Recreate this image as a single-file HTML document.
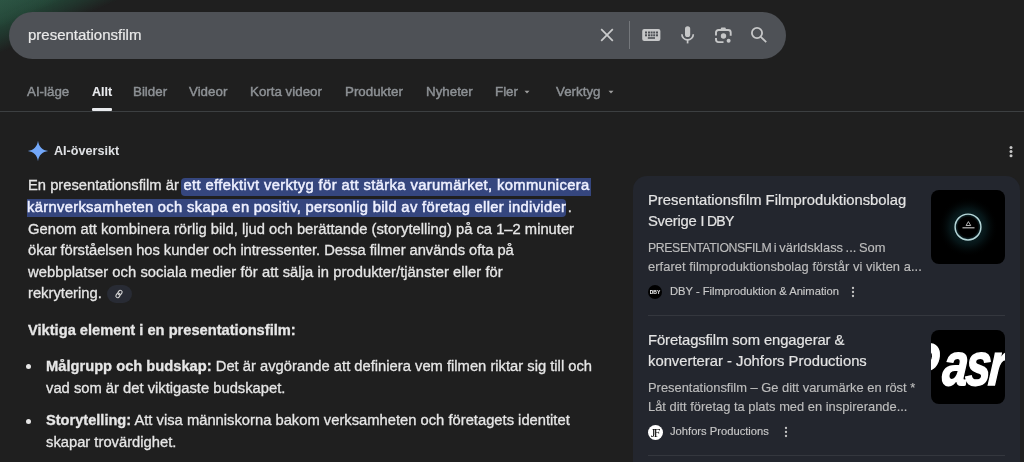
<!DOCTYPE html>
<html><head><meta charset="utf-8">
<style>
*{margin:0;padding:0;box-sizing:border-box}
html,body{width:1024px;height:462px;overflow:hidden;background:#1f1f1f;font-family:"Liberation Sans",sans-serif;color:#e3e3e3}
.abs{position:absolute;white-space:nowrap}
#glow{position:absolute;left:0;top:0;width:300px;height:120px;background:linear-gradient(155.8deg,rgba(62,105,88,0.3) 0%,rgba(62,105,88,0.22) 5%,rgba(62,105,88,0) 11%),linear-gradient(155.8deg,rgba(37,76,59,1) 0%,rgba(35,70,55,0.95) 9%,rgba(33,58,48,0.75) 15%,rgba(31,31,31,0) 21%)}
#sb{position:absolute;left:9px;top:12px;width:777px;height:47px;border-radius:23.5px;background:#4e5156}
#q{left:28px;top:25.6px;font-size:15px;color:#eaeaea;line-height:17px;-webkit-text-stroke:0.2px #eaeaea}
.tab{top:84px;font-size:13.35px;color:#8d9195;line-height:15px;-webkit-text-stroke:0.45px #8d9195}
#tabline{position:absolute;left:0;top:111px;width:1024px;height:1px;background:#3c3f41}
#ul{position:absolute;left:92px;top:108px;width:20px;height:3px;background:#e8eaed;border-radius:1px}
.p{left:28px;font-size:14.75px;color:#e6e6e6;line-height:17px;-webkit-text-stroke:0.3px #e6e6e6}
.hl{color:#eef0ff;-webkit-text-stroke:0.5px #eef0ff}
.hlb{position:absolute;background:#35467e;height:18px}
#card{position:absolute;left:633px;top:176px;width:387px;height:300px;border-radius:14px;background:#23262e}
.ct{font-size:14.8px;color:#e3e3e3;line-height:17px;-webkit-text-stroke:0.2px #e3e3e3}
.cs{font-size:12.9px;color:#bdbdbd;line-height:15px;-webkit-text-stroke:0.15px #bdbdbd}
.src{font-size:11.2px;color:#c8c8c8;line-height:13px;-webkit-text-stroke:0.15px #c8c8c8}
.thumb{position:absolute;left:931px;width:74px;height:74px;border-radius:8px;background:#000;overflow:hidden}
.ic{position:absolute}
</style></head><body><div id="wrap" style="position:absolute;left:0;top:0;width:1024px;height:462px;will-change:transform">
<div id="glow"></div>
<div id="sb"></div>
<div class="abs" id="q">presentationsfilm</div>

<!-- search icons -->
<svg class="ic" style="left:598px;top:26px" width="18" height="18" viewBox="0 0 18 18"><path d="M3.2 3.2L14.8 14.8M14.8 3.2L3.2 14.8" stroke="#cbcccd" stroke-width="1.7"/></svg>
<div class="abs" style="left:629px;top:21px;width:1px;height:28px;background:#74777b"></div>
<svg class="ic" style="left:641px;top:28px" width="21" height="14" viewBox="0 0 21 14">
 <rect x="1.2" y="1" width="18.2" height="12" rx="2" fill="#c6c7c8"/>
 <g fill="#4d5055">
  <rect x="4" y="3.5" width="2" height="2"/><rect x="7" y="3.5" width="2" height="2"/><rect x="9.6" y="3.5" width="2" height="2"/><rect x="12.2" y="3.5" width="2" height="2"/><rect x="15" y="3.5" width="2" height="2"/>
  <rect x="4" y="6.3" width="2" height="2"/><rect x="7" y="6.3" width="2" height="2"/><rect x="9.6" y="6.3" width="2" height="2"/><rect x="12.2" y="6.3" width="2" height="2"/><rect x="15" y="6.3" width="2" height="2"/>
  <rect x="6.8" y="9.2" width="7.2" height="1.6"/>
 </g>
</svg>
<svg class="ic" style="left:680px;top:25px" width="16" height="20" viewBox="0 0 16 20">
 <rect x="5" y="1.2" width="5.2" height="10.8" rx="2.6" fill="#c6c7c8"/>
 <path d="M1.9 9.2a5.7 5.7 0 0 0 11.4 0" fill="none" stroke="#c6c7c8" stroke-width="1.7"/>
 <path d="M7.6 15v3.4" stroke="#c6c7c8" stroke-width="1.7"/>
</svg>
<svg class="ic" style="left:713px;top:25px" width="21" height="21" viewBox="0 0 21 21">
 <g fill="none" stroke="#c6c7c8" stroke-width="1.9">
  <path d="M3 10.5V7.5a2.5 2.5 0 0 1 2.5-2.5h9.7a2.5 2.5 0 0 1 2.5 2.5v3.2"/>
  <path d="M3 13v1.6a2.5 2.5 0 0 0 2.5 2.5h5"/>
 </g>
 <rect x="7.8" y="2.4" width="5" height="2.8" rx="1" fill="#c6c7c8"/>
 <circle cx="10.5" cy="11" r="2.7" fill="#c6c7c8"/>
 <circle cx="15.6" cy="15.8" r="2" fill="#c6c7c8"/>
</svg>
<svg class="ic" style="left:749px;top:25px" width="20" height="20" viewBox="0 0 20 20">
 <circle cx="8" cy="8" r="5.1" fill="none" stroke="#c6c7c8" stroke-width="1.8"/>
 <path d="M11.8 11.8L17.2 17.2" stroke="#c6c7c8" stroke-width="1.8"/>
</svg>

<div class="abs tab" style="left:27px">AI-läge</div>
<div class="abs tab" style="left:92px;color:#e8eaed;font-weight:bold;font-size:12.5px;top:84.5px;-webkit-text-stroke:0.1px #e8eaed">Allt</div>
<div class="abs tab" style="left:133px">Bilder</div>
<div class="abs tab" style="left:189px">Videor</div>
<div class="abs tab" style="left:250px">Korta videor</div>
<div class="abs tab" style="left:345px">Produkter</div>
<div class="abs tab" style="left:426px">Nyheter</div>
<div class="abs tab" style="left:495px">Fler</div>
<svg class="ic" style="left:523px;top:89px" width="8" height="6" viewBox="0 0 8 6"><path d="M1.5 1.8h5L4 4.4z" fill="#9e9e9e"/></svg>
<div class="abs tab" style="left:556px">Verktyg</div>
<svg class="ic" style="left:607px;top:89px" width="8" height="6" viewBox="0 0 8 6"><path d="M1.5 1.8h5L4 4.4z" fill="#9e9e9e"/></svg>
<div id="tabline"></div>
<div id="ul"></div>

<!-- AI overview header -->
<svg class="ic" style="left:27.2px;top:140px" width="22" height="22" viewBox="0 0 22 22">
 <path d="M11 0.8C11.7 6.6 15.3 10.3 21.2 11C15.3 11.7 11.7 15.4 11 21.2C10.3 15.4 6.7 11.7 0.8 11C6.7 10.3 10.3 6.6 11 0.8Z" fill="#72a7f9"/>
</svg>
<div class="abs" style="left:54px;top:144px;font-size:12.6px;font-weight:bold;color:#dfe1e4;line-height:14px">AI-översikt</div>
<svg class="ic" style="left:1008px;top:145px" width="6" height="14" viewBox="0 0 6 14"><circle cx="3" cy="2.6" r="1.5" fill="#c8c8c8"/><circle cx="3" cy="6.6" r="1.5" fill="#c8c8c8"/><circle cx="3" cy="10.7" r="1.5" fill="#c8c8c8"/></svg>

<div class="hlb" style="left:181px;top:178px;width:410px;border-radius:4px 0 0 4px"></div>
<div class="hlb" style="left:27px;top:199px;width:539px;border-radius:0 4px 4px 0"></div>
<div class="abs p" style="top:177px">En presentationsfilm är <span class="hl" style="margin-left:-1px;padding-left:1.5px;letter-spacing:0.38px">ett effektivt verktyg för att stärka varumärket, kommunicera</span></div>
<div class="abs p" style="top:199px"><span class="hl" style="margin-left:-1px;padding-right:1.5px;letter-spacing:0.318px">kärnverksamheten och skapa en positiv, personlig bild av företag eller individer</span>.</div>
<div class="abs p" style="top:221px">Genom att kombinera rörlig bild, ljud och berättande (storytelling) på ca 1–2 minuter</div>
<div class="abs p" style="top:242px;letter-spacing:-0.05px">ökar förståelsen hos kunder och intressenter. Dessa filmer används ofta på</div>
<div class="abs p" style="top:264px;letter-spacing:0.055px">webbplatser och sociala medier för att sälja in produkter/tjänster eller för</div>
<div class="abs p" style="top:285px">rekrytering.</div>
<div class="abs" style="left:107px;top:285px;width:25px;height:18px;border-radius:9px;background:#282b34"></div>
<svg class="ic" style="left:113px;top:288px" width="12" height="12" viewBox="0 0 12 12"><g transform="rotate(-55 6 6)" fill="none" stroke="#d2d2d2" stroke-width="1.1"><rect x="1.9" y="4.2" width="4.8" height="3.6" rx="1.8"/><rect x="5.3" y="4.2" width="4.8" height="3.6" rx="1.8"/></g></svg>

<div class="abs p" style="top:322px;font-weight:bold;font-size:14.66px">Viktiga element i en presentationsfilm:</div>
<div class="abs" style="left:26px;top:364px;width:5px;height:5px;border-radius:50%;background:#e6e6e6"></div>
<div class="abs p" style="top:358px;left:46px"><b style="font-size:14.7px">Målgrupp och budskap:</b> Det är avgörande att definiera vem filmen riktar sig till och</div>
<div class="abs p" style="top:380px;left:46px">vad som är det viktigaste budskapet.</div>
<div class="abs" style="left:26px;top:418.5px;width:5px;height:5px;border-radius:50%;background:#e6e6e6"></div>
<div class="abs p" style="top:412px;left:46px"><b style="font-size:14.6px">Storytelling:</b> Att visa människorna bakom verksamheten och företagets identitet</div>
<div class="abs p" style="top:434px;left:46px">skapar trovärdighet.</div>

<!-- cards -->
<div id="card"></div>
<div class="abs ct" style="left:648px;top:192px">Presentationsfilm Filmproduktionsbolag</div>
<div class="abs ct" style="left:648px;top:213px"><span style="letter-spacing:-0.25px">Sverige</span> <span style="letter-spacing:-0.7px;font-size:14px">I DBY</span></div>
<div class="abs cs" style="left:648px;top:239.5px;word-spacing:-1px"><span style="font-size:12.3px;letter-spacing:-0.4px">PRESENTATIONSFILM</span> i världsklass ... Som</div>
<div class="abs cs" style="left:648px;top:259.3px;letter-spacing:0.06px">erfaret filmproduktionsbolag förstår vi vikten a...</div>
<div class="abs" style="left:648px;top:285px;width:14px;height:14px;border-radius:50%;background:#000;color:#fff;font-size:5px;font-weight:bold;text-align:center;line-height:14px">DBY</div>
<div class="abs src" style="left:670px;top:285px">DBY - Filmproduktion &amp; Animation</div>
<svg class="ic" style="left:850px;top:286px" width="6" height="12" viewBox="0 0 6 12"><circle cx="3" cy="2" r="1.15" fill="#c4c4c4"/><circle cx="3" cy="6" r="1.15" fill="#c4c4c4"/><circle cx="3" cy="10" r="1.15" fill="#c4c4c4"/></svg>
<div class="thumb" style="top:190px">
 <svg width="74" height="74" viewBox="0 0 74 74">
  <defs><radialGradient id="gl" cx="37" cy="37" r="30" gradientUnits="userSpaceOnUse"><stop offset="0.35" stop-color="#0c2427" stop-opacity="1"/><stop offset="0.62" stop-color="#061315" stop-opacity="1"/><stop offset="1" stop-color="#000" stop-opacity="0"/></radialGradient><radialGradient id="gi" cx="37" cy="37" r="13" gradientUnits="userSpaceOnUse"><stop offset="0.75" stop-color="#000"/><stop offset="1" stop-color="#16363c"/></radialGradient></defs>
  <circle cx="37" cy="37" r="30" fill="url(#gl)"/>
  <circle cx="37" cy="37" r="12.9" fill="url(#gi)" stroke="#b6d6d8" stroke-width="1.45"/>
  <path d="M37.4 31.6l2.3 3.9h-4.6z" fill="none" stroke="#e0e0e0" stroke-width="0.8"/>
  <rect x="31.5" y="37.2" width="12" height="1.2" fill="#b8b8b8"/>
 </svg>
</div>

<div class="abs" style="left:648px;top:315px;width:357px;height:1px;background:#34373e"></div>

<div class="abs ct" style="left:648px;top:332px;letter-spacing:-0.1px">Företagsfilm som engagerar &amp;</div>
<div class="abs ct" style="left:648px;top:353px">konverterar - Johfors Productions</div>
<div class="abs cs" style="left:648px;top:379.5px">Presentationsfilm – Ge ditt varumärke en röst *</div>
<div class="abs cs" style="left:648px;top:399.3px">Låt ditt företag ta plats med en inspirerande...</div>
<div class="abs" style="left:648px;top:425px;width:15px;height:15px;border-radius:50%;background:#fff;color:#000;font-family:'Liberation Serif',serif;font-size:12px;letter-spacing:-1.6px;text-indent:-1.5px;text-align:center;line-height:16px">JF</div>
<div class="abs src" style="left:670px;top:425px">Johfors Productions</div>
<svg class="ic" style="left:783px;top:426px" width="6" height="12" viewBox="0 0 6 12"><circle cx="3" cy="2" r="1.15" fill="#c4c4c4"/><circle cx="3" cy="6" r="1.15" fill="#c4c4c4"/><circle cx="3" cy="10" r="1.15" fill="#c4c4c4"/></svg>
<div class="thumb" style="top:330px">
 <div class="abs" style="left:-18px;top:0px;font-size:60px;font-weight:bold;font-style:italic;color:#fff;letter-spacing:-3px;line-height:70px;-webkit-text-stroke:1.6px #fff;transform:scaleX(0.76) skewX(-6deg);transform-origin:0 58px"><span style="position:relative;left:-9px">P</span>asr</div>
</div>
<div class="abs" style="left:648px;top:455px;width:357px;height:1px;background:#34373e"></div>

</div></body></html>
